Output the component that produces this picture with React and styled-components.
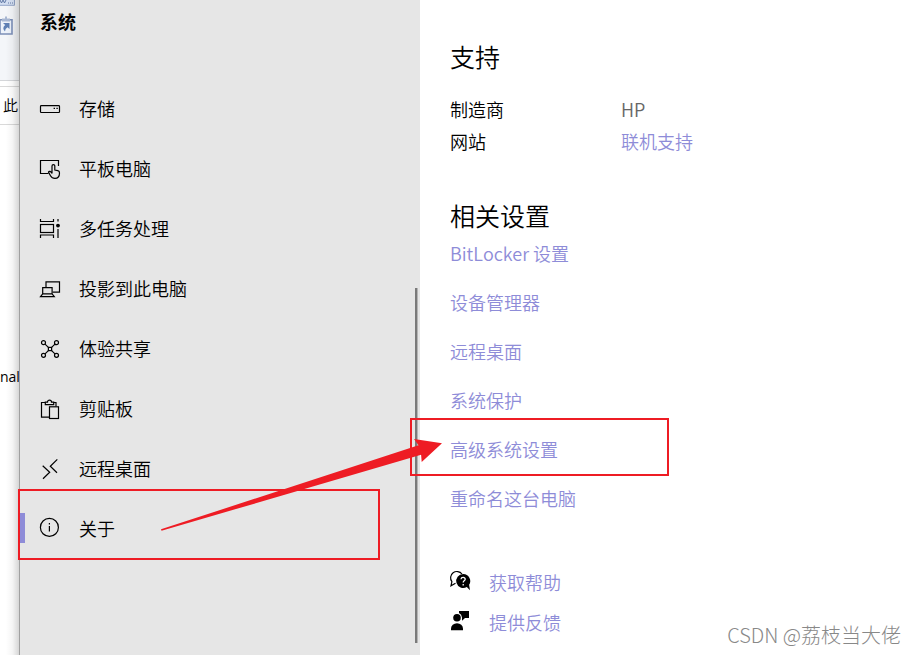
import React from "react";
import styled, { createGlobalStyle } from "styled-components";

const GlobalStyle = createGlobalStyle`
  * {
    box-sizing: border-box;
  }
  body {
    margin: 0;
    background-color: #ffffff;
    color: #000000;
    font-family: "Noto Sans CJK SC", "Noto Sans", sans-serif;
    font-size: 18px;
    font-weight: 350;
    line-height: 24px;
  }
`;

const Screen = styled.div`
  position: relative;
  display: flex;
  min-height: 100vh;
  overflow: hidden;
`;

const BackWindow = styled.div`
  position: relative;
  flex: 0 0 20px;
  display: flex;
  flex-direction: column;
  overflow: hidden;
  white-space: nowrap;
  border-right: 1px solid #a0a0a0;

  &::after {
    content: "";
    position: absolute;
    inset: 0;
    background: linear-gradient(
      to right,
      transparent 30%,
      rgba(0, 0, 0, 0.04) 65%,
      rgba(0, 0, 0, 0.16)
    );
  }
`;

const Ribbon = styled.div`
  height: 81px;
  background-color: #f4f6f9;
  border-bottom: 1px solid #d4d6d9;
`;

const AddressBar = styled.div`
  height: 39px;
  margin-top: 5px;
  padding-left: 3px;
  border-top: 1px solid #d9d9d9;
  border-bottom: 1px solid #d9d9d9;
  font-size: 15px;
  line-height: 36px;
`;

const FileName = styled.div`
  margin-top: 240px;
  font-family: "Open Sans", "Noto Sans", sans-serif;
  font-size: 14px;
  font-weight: 400;
`;

const Sidebar = styled.aside`
  position: relative;
  flex: 0 0 400px;
  background-color: #e6e6e6;
`;

const SidebarTitle = styled.h1`
  margin: 0;
  padding: 9px 20px 45px;
  font-size: 18px;
  font-weight: 700;
  line-height: 24px;
`;

const NavItem = styled.a`
  display: flex;
  align-items: center;
  gap: 18px;
  height: 60px;
  padding-left: 14px;
  border-left: 5px solid transparent;
  border-image: ${(props) =>
    props.$active
      ? "linear-gradient(transparent 25%, #8e8cd8 25% 75%, transparent 75%) 0 0 0 5"
      : "none"};
  color: #000000;
  text-decoration: none;

  svg {
    margin-top: 1px;
  }
`;

const ScrollThumb = styled.div`
  position: absolute;
  top: 288px;
  right: 2px;
  bottom: 12px;
  width: 3px;
  background-color: #7a7a7a;
  border-right: 1px solid #b5b5b5;
`;

const Main = styled.main`
  flex: 1;
  min-width: 0;
  padding: 36px 30px 20px;
`;

const Heading = styled.h2`
  margin: 0;
  font-size: 25px;
  font-weight: 350;
  line-height: 40px;
`;

const Details = styled.dl`
  display: grid;
  grid-template-columns: 171px 1fr;
  margin: 17px 0 38px;
  line-height: 32px;

  dd {
    margin: 0;
    color: #666666;
  }
`;

const Link = styled.a`
  color: #8e8cd8;
  text-decoration: none;
`;

const LinkList = styled.div`
  display: flex;
  flex-direction: column;
  align-items: flex-start;
  gap: 25px;
  margin-top: 6px;
`;

const HelpList = styled.div`
  display: flex;
  flex-direction: column;
  gap: 16px;
  margin-top: 60px;
`;

const HelpRow = styled.div`
  display: flex;
  align-items: center;
  gap: 17px;
`;

const Markup = styled.svg`
  position: absolute;
  top: 0;
  left: 0;
  pointer-events: none;
`;

const Watermark = styled.div`
  position: absolute;
  right: 15px;
  bottom: 6px;
  color: #888888;
  font-size: 20px;
  font-weight: 300;
  line-height: 28px;
`;

const Icon = ({ children }) => (
  <svg
    width="22"
    height="22"
    viewBox="0 0 22 22"
    fill="none"
    stroke="#000"
    strokeWidth="1.2"
    overflow="visible"
    aria-hidden="true"
  >
    {children}
  </svg>
);

const navItems = [
  {
    text: "存储",
    icon: (
      <>
        <rect x="1.5" y="7.7" width="19" height="6.8" rx="0.8" />
        <path d="M14.6 10.3h1.4M17.4 10.3h1.4" />
      </>
    ),
  },
  {
    text: "平板电脑",
    icon: (
      <>
        <path d="M9.5 15.5h-8v-13h18V8" />
        <path d="M13 15.5V8a1.4 1.4 0 0 1 2.8 0v4l3 .7q1.8.5 1.7 2.3c0 3.6-1.5 5.4-4.6 5.4-2.2 0-3.4-.8-4.4-2.6l-2-3.7c.6-1.4 2.2-.9 3.5 1.4" />
      </>
    ),
  },
  {
    text: "多任务处理",
    icon: (
      <>
        <rect x="1.5" y="6.5" width="13" height="8" />
        <path d="M1.5 1v2.5h13V1M1.5 20v-3h13v3M19 1v2.5M19 11v9" />
        <circle cx="19" cy="7.6" r="1.3" fill="#000" />
      </>
    ),
  },
  {
    text: "投影到此电脑",
    icon: (
      <>
        <path d="M7 9V3.8h13.5v10.4h-6.8" />
        <path d="M3.7 15.8V9.7h9.4v6.1zl-2.2 2.8h13.8l-2.2-2.8" />
      </>
    ),
  },
  {
    text: "体验共享",
    icon: (
      <>
        <circle cx="4.5" cy="4.7" r="2" />
        <circle cx="17.5" cy="4.7" r="2" />
        <circle cx="4.5" cy="17.3" r="2" />
        <circle cx="17.5" cy="17.3" r="2" />
        <path d="M6 6.1l3.4 3.3M16 6.1l-3.4 3.3M6 15.9l3.4-3.3M16 15.9l-3.4-3.3" />
        <rect x="9.4" y="9.4" width="3.2" height="3.2" />
      </>
    ),
  },
  {
    text: "剪贴板",
    icon: (
      <>
        <path d="M10.5 19.2h-8V4.5H6M15 4.5h2v4" />
        <path d="M6.3 6.7V4.1h2.2a2 2 0 0 1 4 0h2.2v2.6z" />
        <rect x="10.5" y="8.8" width="9" height="11.7" />
      </>
    ),
  },
  {
    text: "远程桌面",
    icon: <path d="M3.7 7.7l7 6.6-6.7 6.4M18.3 1.3l-7 7 6.7 6.4" />,
  },
  {
    text: "关于",
    active: true,
    icon: (
      <>
        <circle cx="10.4" cy="9.4" r="9" />
        <path d="M10.4 4.9v1.5M10.4 7.9v5.6" />
      </>
    ),
  },
];

const links = [
  "BitLocker 设置",
  "设备管理器",
  "远程桌面",
  "系统保护",
  "高级系统设置",
  "重命名这台电脑",
];

const ShortcutIcon = () => (
  <svg width="15" height="36" viewBox="0 0 15 36" aria-hidden="true">
    <path d="M0 0h14v5H0z" fill="#d5e0f3" />
    <path d="M0 5.3h14.5V0" fill="none" stroke="#93a5c8" />
    <path d="M0 0l1.5 3L3 0l1.5 3L6 0M8 3h1M10 3h1M12 3h1" fill="none" stroke="#6178a5" />
    <path d="M0 19.8h12V34H0z" fill="#eef3fb" stroke="#7c90b8" strokeWidth="1.6" />
    <path d="M2 18.5h8v3H2zM5 16.5h2v2H5z" fill="#a9b8d3" />
    <path d="M3 23h6.5v6l-2-1.8Q5 28.5 5 31.5 1.5 28 5.2 25z" fill="#5f80b5" />
  </svg>
);

const HelpIcon = () => (
  <Icon>
    <path d="M5.5 12.2L1 14.8l.9-4.1A5.8 5.8 0 1 1 12 3" />
    <path
      d="M13.2 3a7 7 0 1 0 3.6 13l3.2 3.3-.9-5.5A7 7 0 0 0 13.2 3z"
      fill="#000"
      stroke="none"
    />
    <path d="M11 8.2c.2-2.6 4.4-2.3 4.2.1-.1 1.6-2 1.5-2 3.2M13.2 12.9v1.5" stroke="#fff" strokeWidth="1.3" />
  </Icon>
);

const FeedbackIcon = () => (
  <Icon>
    <g fill="#000" stroke="none">
      <circle cx="7" cy="6.8" r="3.8" />
      <path d="M1 19.2v-1.4a6 5.6 0 0 1 12 0v1.4z" />
      <path d="M9 0h10v7h-4l-3 2.7V6.5A6 6 0 0 0 9 2z" />
    </g>
  </Icon>
);

export default () => {
  return (
    <Screen>
      <GlobalStyle />
      <BackWindow>
        <Ribbon>
          <ShortcutIcon />
        </Ribbon>
        <AddressBar>此电脑</AddressBar>
        <FileName>nal</FileName>
      </BackWindow>
      <Sidebar>
        <SidebarTitle>系统</SidebarTitle>
        <nav>
          {navItems.map((item) => (
            <NavItem key={item.text} href="#" $active={item.active}>
              <Icon>{item.icon}</Icon>
              <span>{item.text}</span>
            </NavItem>
          ))}
        </nav>
        <ScrollThumb />
      </Sidebar>
      <Main>
        <Heading>支持</Heading>
        <Details>
          <dt>制造商</dt>
          <dd>HP</dd>
          <dt>网站</dt>
          <dd>
            <Link href="#">联机支持</Link>
          </dd>
        </Details>
        <Heading>相关设置</Heading>
        <LinkList>
          {links.map((text) => (
            <Link key={text} href="#">
              {text}
            </Link>
          ))}
        </LinkList>
        <HelpList>
          <HelpRow>
            <HelpIcon />
            <Link href="#">获取帮助</Link>
          </HelpRow>
          <HelpRow>
            <FeedbackIcon />
            <Link href="#">提供反馈</Link>
          </HelpRow>
        </HelpList>
      </Main>
      <Markup width="680" height="570" viewBox="0 0 680 570" aria-hidden="true">
        <g fill="none" stroke="#ee1c24" strokeWidth="2">
          <rect x="19" y="490" width="360" height="69" />
          <rect x="411" y="419" width="257" height="56" />
        </g>
        <path
          d="M161 529.3L418.5 445.3 414 439l28 4.2-20.3 18.8-.6-7.2L161.5 530.8z"
          fill="#ee1c24"
        />
      </Markup>
      <Watermark>CSDN @荔枝当大佬</Watermark>
    </Screen>
  );
};
